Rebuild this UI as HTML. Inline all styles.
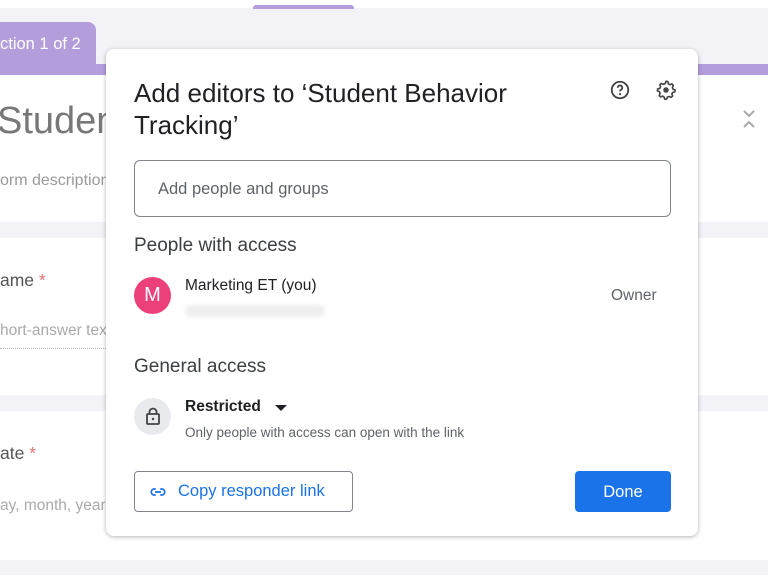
<!DOCTYPE html>
<html><head><style>
body{margin:0;width:768px;height:578px;overflow:hidden;background:#f3f2f7;font-family:"Liberation Sans",Arial,sans-serif;position:relative}
.a{position:absolute}
.card{position:absolute;left:0;width:768px;background:#fff}
</style></head><body>
<div class="a" style="left:0;top:0;width:768px;height:8px;background:#fff"></div>
<div class="a" style="left:253px;top:5px;width:101px;height:4px;background:#b39ddb;border-radius:3px 3px 0 0"></div>
<div class="a" style="left:-10px;top:22px;width:106px;height:48px;background:#b39ddb;border-radius:8px 8px 0 0"></div>
<div class="a" style="left:0;top:26px;color:#fff;font-size:16.5px;line-height:36px">ction 1 of 2</div>
<div class="a" style="left:0;top:64px;width:768px;height:11px;background:#b39ddb"></div>
<div class="card" style="top:75px;height:147px"></div>
<div class="a" style="left:-3px;top:100px;font-size:38px;color:#777">Student</div>
<div class="a" style="left:0;top:172px;font-size:16px;color:#999">orm description</div>
<svg class="a" style="left:742px;top:108px" width="14" height="22" viewBox="0 0 14 22"><path d="M2 3l5 5 5-5M2 19l5-5 5 5" fill="none" stroke="#aaa" stroke-width="2"/></svg>
<div class="card" style="top:238px;height:157px"></div>
<div class="a" style="left:0;top:270px;font-size:17.5px;color:#555">ame <span style="color:#e57373">*</span></div>
<div class="a" style="left:0;top:322px;font-size:15.5px;color:#aaa">hort-answer tex</div>
<div class="a" style="left:0;top:348px;width:110px;border-top:1px dotted #bbb"></div>
<div class="card" style="top:411px;height:149px"></div>
<div class="a" style="left:0;top:443px;font-size:17.5px;color:#555">ate <span style="color:#e57373">*</span></div>
<div class="a" style="left:0;top:497px;font-size:15.5px;color:#aaa">ay, month, year</div>
<div class="card" style="top:575px;height:10px"></div>

<div class="a" style="left:106px;top:49px;width:592px;height:487px;background:#fff;border-radius:8px;box-shadow:0 1px 4px rgba(0,0,0,.3)">
 <div class="a" style="left:28px;top:28px;font-size:26px;line-height:32px;color:#202124;width:440px">Add editors to ‘Student Behavior Tracking’</div>
 <svg class="a" style="left:503px;top:30px" width="22" height="22" viewBox="0 0 24 24"><circle cx="12" cy="12" r="9" fill="none" stroke="#444" stroke-width="2"/><path d="M9.5 9.5a2.5 2.5 0 1 1 3.5 2.3c-.7.4-1 .8-1 1.7" fill="none" stroke="#444" stroke-width="2"/><circle cx="12" cy="16.5" r="1.2" fill="#444"/></svg>
 <svg class="a" style="left:549px;top:30px" width="22" height="22" viewBox="0 0 24 24"><path d="M12 2.5l2 .3.5 2.4 1.7 1 2.3-.8 1.4 1.5-.9 2.3.6 1.8 2.3 1-.2 2-2.3.6-1 1.7.8 2.3-1.5 1.4-2.3-.9-1.8.6-1 2.3h-2l-.6-2.3-1.7-1-2.3.8-1.4-1.5.9-2.3-.6-1.8-2.3-1 .2-2 2.3-.6 1-1.7-.8-2.3 1.5-1.4 2.3.9 1.8-.6z" fill="none" stroke="#444" stroke-width="1.8" stroke-linejoin="round"/><circle cx="12" cy="12" r="3" fill="#444"/></svg>
 <div class="a" style="left:28px;top:111px;width:535px;height:55px;border:1px solid #80868b;border-radius:6px"></div>
 <div class="a" style="left:52px;top:131px;font-size:16.5px;color:#5f6368">Add people and groups</div>
 <div class="a" style="left:28px;top:186px;font-size:19px;color:#3c4043">People with access</div>
 <div class="a" style="left:28px;top:228px;width:37px;height:37px;border-radius:50%;background:#ec407a;color:#fff;font-size:20px;text-align:center;line-height:37px">M</div>
 <div class="a" style="left:79px;top:228px;font-size:15.5px;color:#202124">Marketing ET (you)</div>
 <div class="a" style="left:79px;top:256px;width:140px;height:12px;background:#eee;border-radius:6px;filter:blur(2px)"></div>
 <div class="a" style="left:505px;top:238px;font-size:15.5px;color:#5f6368">Owner</div>
 <div class="a" style="left:28px;top:307px;font-size:19px;color:#3c4043">General access</div>
 <div class="a" style="left:28px;top:349px;width:37px;height:37px;border-radius:50%;background:#e8eaed"></div>
 <svg class="a" style="left:37px;top:357px" width="20" height="20" viewBox="0 0 20 20"><rect x="4" y="8" width="12" height="10" rx="1" fill="none" stroke="#444" stroke-width="1.8"/><path d="M6.5 8V6a3.5 3.5 0 0 1 7 0v2" fill="none" stroke="#444" stroke-width="1.8"/><circle cx="10" cy="13" r="1.2" fill="#444"/></svg>
 <div class="a" style="left:79px;top:349px;font-size:15.5px;font-weight:bold;color:#202124">Restricted</div>
 <div class="a" style="left:169px;top:356px;width:0;height:0;border-left:6px solid transparent;border-right:6px solid transparent;border-top:6px solid #202124"></div>
 <div class="a" style="left:79px;top:376px;font-size:13.5px;color:#5f6368">Only people with access can open with the link</div>
 <div class="a" style="left:28px;top:422px;width:217px;height:39px;border:1px solid #80868b;border-radius:4px"></div>
 <svg class="a" style="left:42px;top:434px" width="20" height="18" viewBox="0 0 24 24"><path d="M9 8H7a4 4 0 0 0 0 8h2M15 8h2a4 4 0 0 1 0 8h-2M8 12h8" fill="none" stroke="#1a73e8" stroke-width="2.2"/></svg>
 <div class="a" style="left:72px;top:433px;font-size:16.5px;color:#1a73e8">Copy responder link</div>
 <div class="a" style="left:469px;top:422px;width:96px;height:41px;background:#1a73e8;border-radius:4px;color:#fff;font-size:16.5px;text-align:center;line-height:42px">Done</div>
</div>
</body></html>
